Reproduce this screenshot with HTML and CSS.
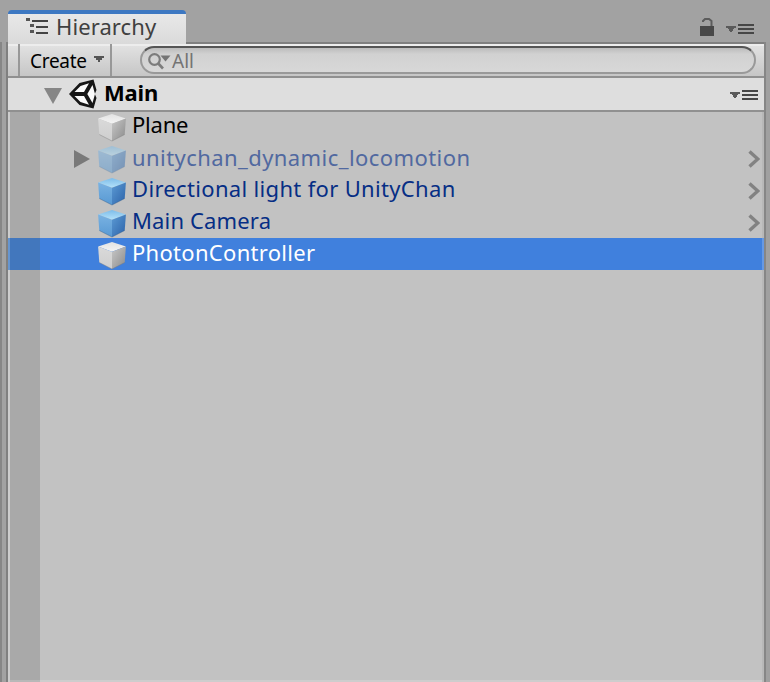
FILE: index.html
```html
<!DOCTYPE html>
<html lang="en">
<head>
<meta charset="utf-8">
<title>Hierarchy</title>
<link rel="stylesheet" href="styles.css">
</head>
<body>
<svg class="defs" width="0" height="0" aria-hidden="true">
  <defs>
    <linearGradient id="gt" x1="0" y1="0" x2="0" y2="1"><stop offset="0" stop-color="#e2e2e2"/><stop offset="1" stop-color="#f4f4f4"/></linearGradient>
    <linearGradient id="gl" x1="0" y1="0" x2="0" y2="1"><stop offset="0" stop-color="#dadada"/><stop offset="1" stop-color="#cecece"/></linearGradient>
    <linearGradient id="gr" x1="0" y1="0" x2="1" y2="1"><stop offset="0" stop-color="#c8c8c8"/><stop offset="1" stop-color="#8a8a8a"/></linearGradient>
    <linearGradient id="bt" x1="0" y1="0" x2="0" y2="1"><stop offset="0" stop-color="#7dbce9"/><stop offset="1" stop-color="#b4e2fa"/></linearGradient>
    <linearGradient id="bl" x1="0" y1="0" x2="0" y2="1"><stop offset="0" stop-color="#79b2e2"/><stop offset="1" stop-color="#5899d3"/></linearGradient>
    <linearGradient id="br" x1="0" y1="0" x2="1" y2="1"><stop offset="0" stop-color="#5b9ad4"/><stop offset="1" stop-color="#2c62a8"/></linearGradient>
    <symbol id="cube-gray" viewBox="0 0 28 28">
      <path d="M14 0 27.900 4.500 14 9.800 .1 4.500Z" fill="url(#gt)"/>
      <path d="M.1 4.500 14 9.800V27L1.300 20.500Z" fill="url(#gl)"/>
      <path d="M27.900 4.500 14 9.800V27L26.700 20.500Z" fill="url(#gr)"/>
      <path d="M1.300 20.500 14 27 26.700 20.500" fill="none" stroke="#777" stroke-opacity=".5" stroke-width=".8"/>
    </symbol>
    <symbol id="cube-blue" viewBox="0 0 28 28">
      <path d="M14 0 27.900 4.500 14 9.800 .1 4.500Z" fill="url(#bt)"/>
      <path d="M.1 4.500 14 9.800V27L1.300 20.500Z" fill="url(#bl)"/>
      <path d="M27.900 4.500 14 9.800V27L26.700 20.500Z" fill="url(#br)"/>
      <path d="M1.300 20.500 14 27 26.700 20.500" fill="none" stroke="#285487" stroke-opacity=".5" stroke-width=".8"/>
    </symbol>
    <symbol id="menu" viewBox="0 0 28 12">
      <path d="M0 3H10V5H8V6H7V8H6V9H4V8H3V6H2V5H0Z" fill="#5a5a5a"/>
      <path d="M12 1H28V3H12ZM12 5H28V7H12ZM12 9H28V11H12Z" fill="#464646"/>
    </symbol>
    <symbol id="chev" viewBox="0 0 12 18">
      <path d="M1.500 1.500 9.800 9 1.500 16.500" fill="none" stroke="#828282" stroke-width="3.400"/>
    </symbol>
  </defs>
</svg>
<div class="window">
  <header class="tabbar">
    <div class="tab">
      <svg class="tab-icon" width="22" height="17" viewBox="0 0 22 17"><path d="M0 0H4V3H0ZM4 6H8V9H4ZM4 12H8V15H4Z" fill="#555"/><path d="M6 2H22V4H6ZM10 8H22V10H10ZM10 14H22V16H10Z" fill="#444"/></svg>
      <span class="tab-label">Hierarchy</span>
    </div>
    <div class="tab-actions">
      <svg width="14" height="18" viewBox="0 0 14 18"><path d="M0 8H14V18H0Z" fill="#484848"/><path d="M3 4V3L5 1H9L11.500 3V8" fill="none" stroke="#5c5c5c" stroke-width="2"/></svg>
      <svg width="28" height="12"><use href="#menu"/></svg>
    </div>
  </header>
  <div class="frame">
    <i class="edge"></i>
    <main class="panel">
      <div class="toolbar">
        <button class="create"><span>Create</span><svg width="10" height="7" viewBox="0 0 10 7"><path d="M0 0H10V2H8V4H6V6H4V4H2V2H0Z" fill="#555"/></svg></button>
        <label class="search">
          <svg width="24" height="20" viewBox="0 0 24 20"><circle cx="6.500" cy="7.500" r="5.300" fill="none" stroke="#7c7c7c" stroke-width="2.200"/><path d="M10.300 11.500 15 16.500" stroke="#7c7c7c" stroke-width="2.600"/><path d="M12.500 3.500H22.500L17.500 9.500Z" fill="#747474"/></svg>
          <span>All</span>
        </label>
      </div>
      <div class="scene">
        <svg class="fold" width="18" height="16" viewBox="0 0 18 16"><path d="M0 0H18L9 16Z" fill="#868686"/></svg>
        <svg class="logo" width="28" height="30" viewBox="0 0 28 30"><path d="M0 15 10.500 4 24.500 0.500 27.500 11 25.800 15 27.500 19 24.500 29.500 10.500 26Z" fill="#161616"/><path d="M11.500 7 20 4.200 15 13H5.500ZM23.500 6 26 15 23.500 24 18.300 15ZM5.500 17H15L20 25.800 11.500 23Z" fill="#fafafa"/></svg>
        <span class="scene-name">Main</span>
        <svg class="scene-menu" width="28" height="12"><use href="#menu"/></svg>
      </div>
      <div class="tree">
        <div class="row first"><svg class="cube" width="28" height="28"><use href="#cube-gray"/></svg><span class="name plane">Plane</span></div>
        <div class="row prefab off"><svg class="arrow" width="16" height="18" viewBox="0 0 16 18"><path d="M0 0 16 9 0 18Z" fill="#797979"/></svg><svg class="cube" width="28" height="28"><use href="#cube-blue"/></svg><span class="name chan">unitychan_dynamic_locomotion</span><svg class="chev" width="12" height="18"><use href="#chev"/></svg></div>
        <div class="row prefab"><svg class="cube" width="28" height="28"><use href="#cube-blue"/></svg><span class="name light">Directional light for UnityChan</span><svg class="chev" width="12" height="18"><use href="#chev"/></svg></div>
        <div class="row prefab"><svg class="cube" width="28" height="28"><use href="#cube-blue"/></svg><span class="name camera">Main Camera</span><svg class="chev" width="12" height="18"><use href="#chev"/></svg></div>
        <div class="row selected"><svg class="cube" width="28" height="28"><use href="#cube-gray"/></svg><span class="name photon">PhotonController</span></div>
      </div>
    </main>
    <i class="edge-right"></i>
  </div>
</div>
</body>
</html>
```
FILE: styles.css
```css
* { box-sizing: border-box; }
body { margin: 0; background: #a2a2a2; font-family: "Noto Sans", "Open Sans", sans-serif; font-size: 22px; color: #000; overflow: hidden; }
svg { display: block; flex: none; }
.defs { position: absolute; }
.window { width: 770px; height: 682px; display: flex; flex-direction: column; }
.tabbar { height: 42px; flex: none; display: flex; padding: 10px 16px 0 8px; justify-content: space-between; }
.tab { width: 178px; height: 34px; border-top: 4px solid #3d78c2; border-radius: 4px 4px 0 0; background: linear-gradient(#e8e8e8, #dadada); display: flex; align-items: center; padding-left: 18px; gap: 8px; color: #404040; z-index: 1; }
.tab-icon { margin-top: -6px; }
.tab-label { line-height: 28px; margin-top: -6px; letter-spacing: .1px; white-space: nowrap; }
.tab-actions { display: flex; gap: 12px; padding-top: 8px; }
.tab-actions svg + svg { margin-top: 5px; }
.frame { flex: 1; display: flex; min-height: 0; }
.edge { width: 8px; background: linear-gradient(90deg, #868686 2px, #a2a2a2 2px, #a2a2a2 6px, #808080 6px); }
.edge-right { width: 6px; background: linear-gradient(90deg, #868686 2px, #a0a0a0 2px); }
.panel { flex: 1; min-width: 0; border-top: 2px solid #808080; display: flex; flex-direction: column; }
.toolbar { height: 34px; flex: none; border-bottom: 2px solid #909090; background: linear-gradient(#ededed 2px, #e1e1e1 2px, #c6c6c6); display: flex; padding-right: 8px; }
.create { margin: 0 0 0 10px; width: 94px; height: 32px; border: solid #989898; border-width: 0 2px; padding: 0 6px 0 10px; background: none; font: 19px/34px "Noto Sans", sans-serif; letter-spacing: -.3px; color: #000; display: flex; justify-content: space-between; }
.create svg { margin-top: 12px; }
.search { margin: 2px 0 0 28px; flex: 1; height: 28px; border: 2px solid #999; border-top-color: #555; border-radius: 14px; background: linear-gradient(#bcbcbc, #d1d1d1 6px, #d8d8d8); display: flex; padding-left: 6px; font-size: 19px; line-height: 26px; color: #747474; }
.search svg { margin-top: 4px; }
.scene { height: 34px; flex: none; background: #dedede; border-bottom: 2px solid #909090; display: flex; padding: 0 6px 0 36px; font-weight: 700; line-height: 29px; }
.fold { margin-top: 10px; }
.logo { margin: 1px 0 0 7px; }
.scene-name { margin-left: 7px; letter-spacing: -.2px; }
.scene-menu { margin: 11px 0 0 auto; }
.tree { flex: 1; border: solid rgba(255,255,255,.18); border-width: 0 2px 2px; background: linear-gradient(90deg, #a9a9a9 30px, #c2c2c2 30px); }
.row { height: 32px; display: flex; align-items: flex-start; padding: 0 2px 0 88px; margin-right: -2px; }
.row.first { height: 30px; }
.first > * { position: relative; top: -2px; }
.cube { margin-top: 4px; }
.arrow { margin: 8px 8px 0 -24px; }
.name { margin-left: 6px; line-height: 29px; white-space: nowrap; }
.plane { letter-spacing: -.2px; }
.chan { letter-spacing: .43px; }
.light { letter-spacing: .33px; }
.camera { letter-spacing: .15px; }
.photon { letter-spacing: .3px; }
.chev { margin: 8px 2px 0 auto; }
.prefab { color: #062e85; }
.off { color: #5169a0; }
.off .cube { opacity: .5; }
.off .name { line-height: 30px; }
.selected { margin: 0 -2px; padding-left: 90px; color: #fff; background: linear-gradient(90deg, #6595d0 2px, #4277bd 2px, #4277bd 32px, #4080dd 32px, #4080dd 754px, #6699e4 754px); }
```
